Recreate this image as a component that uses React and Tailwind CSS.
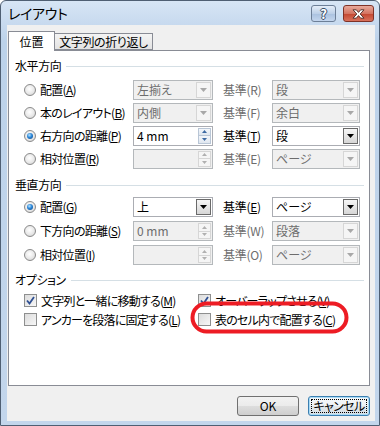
import React from "react";

const FONT = "font-['Noto_Sans_CJK_JP','Noto_Sans_CJK_SC',sans-serif] [font-feature-settings:'palt']";

function Tri({ down = true, color = "#000", w = 7, h = 4 }) {
  return (
    <svg width={w} height={h} viewBox={`0 0 ${w} ${h}`}>
      <path d={down ? `M0 0H${w}L${w / 2} ${h}Z` : `M0 ${h}H${w}L${w / 2} 0Z`} fill={color} />
    </svg>
  );
}

function Acc({ text, k }) {
  return (
    <>
      {text}(<span className="underline underline-offset-[1px]">{k}</span>)
    </>
  );
}

function Radio({ checked }) {
  return (
    <span className="relative inline-block w-[12px] h-[12px] shrink-0 rounded-full border border-[#8a8a8a] bg-[radial-gradient(circle_at_45%_40%,#ffffff_0%,#e8e8e8_55%,#c9c9c9_100%)]">
      {checked && (
        <span className="absolute left-[2px] top-[2px] w-[6px] h-[6px] rounded-full bg-[radial-gradient(circle_at_40%_35%,#b8e4ff_0%,#2a86d8_45%,#0c3f7c_100%)]" />
      )}
    </span>
  );
}

function Check({ checked }) {
  return (
    <span className="relative inline-flex items-center justify-center w-[13px] h-[13px] shrink-0 border border-[#8e8f8f] bg-[linear-gradient(135deg,#dcdcdc,#f7f7f7)]">
      {checked && (
        <svg width="9" height="9" viewBox="0 0 9 9">
          <path d="M1 4.5 L3.5 7.5 L8 1" fill="none" stroke="#2e4f92" strokeWidth="1.8" />
        </svg>
      )}
    </span>
  );
}

function Combo({ text, enabled, wide }) {
  return (
    <div
      className={`flex h-[20px] shrink-0 ${wide ? "w-[88px]" : "w-[80px]"} border ${
        enabled ? "border-[#abadb3] bg-white" : "border-[#b4b8bb] bg-[#f0f0f0]"
      }`}
    >
      <span
        className={`flex-1 flex items-center pl-[3px] text-[12px] leading-none whitespace-nowrap ${
          enabled ? "text-black" : "text-[#6d6d6d]"
        }`}
      >
        {text}
      </span>
      {enabled ? (
        <span className="m-[1px] w-[15px] flex items-center justify-center border border-[#6a6a6a] bg-[linear-gradient(#f6f6f6,#d6d6d6)]">
          <Tri color="#000" />
        </span>
      ) : (
        <span className="m-[1px] w-[15px] flex items-center justify-center border border-[#d6d6d6] bg-[#f5f5f5]">
          <Tri color="#a8a8a8" />
        </span>
      )}
    </div>
  );
}

function Spin({ text, enabled }) {
  const arrow = enabled ? "#3d6aa3" : "#b0b0b0";
  return (
    <div
      className={`flex h-[20px] w-[80px] shrink-0 border ${
        enabled ? "border-[#abadb3] bg-white" : "border-[#b4b8bb] bg-[#f0f0f0]"
      }`}
    >
      <span
        className={`flex-1 flex items-center pl-[3px] text-[12px] leading-none whitespace-pre ${
          enabled ? "text-black" : "text-[#6d6d6d]"
        }`}
      >
        {text}
      </span>
      <span className="my-[1px] mr-[1px] w-[13px] flex flex-col">
        <span
          className={`flex-1 flex items-center justify-center border ${
            enabled ? "border-[#b9c6d6] bg-[linear-gradient(#f4f7fb,#dfe6ef)]" : "border-[#d6d6d6] bg-[#f5f5f5]"
          }`}
        >
          <Tri down={false} color={arrow} w={5} h={3} />
        </span>
        <span
          className={`flex-1 flex items-center justify-center border border-t-0 ${
            enabled ? "border-[#b9c6d6] bg-[linear-gradient(#f4f7fb,#dfe6ef)]" : "border-[#d6d6d6] bg-[#f5f5f5]"
          }`}
        >
          <Tri color={arrow} w={5} h={3} />
        </span>
      </span>
    </div>
  );
}

function Header({ text }) {
  return (
    <div className="flex items-center h-[16px] pl-[6px] pr-[5px]">
      <span className="text-[12px] leading-none text-black tracking-[-0.4px]">{text}</span>
      <span className="flex-1 h-px ml-[5px] bg-[#d5dfe5]" />
    </div>
  );
}

function Row({ h, checked, label, ctrl, refLabel, refEnabled, refCtrl }) {
  return (
    <div className={`flex items-center ${h} pl-[15px]`}>
      <Radio checked={checked} />
      <span className="w-[97px] pl-[4px] text-[12px] leading-none text-black whitespace-nowrap tracking-[-0.7px]">
        {label}
      </span>
      {ctrl}
      <span
        className={`ml-[10px] w-[49px] text-[12px] leading-none whitespace-nowrap tracking-[-0.3px] ${
          refEnabled ? "text-black" : "text-[#6d6d6d]"
        }`}
      >
        {refLabel}
      </span>
      {refCtrl}
    </div>
  );
}

function Opt({ checked, text, k }) {
  return (
    <>
      <Check checked={checked} />
      <span className="ml-[4px] text-[12px] leading-none text-black whitespace-nowrap tracking-[-0.8px]">
        <Acc text={text} k={k} />
      </span>
    </>
  );
}

export default function App() {
  return (
    <div className={`relative w-[380px] h-[426px] overflow-hidden bg-white ${FONT}`}>
      <div className="flex flex-col h-full border border-[#4f5f73] rounded-t-[6px] bg-[linear-gradient(#d7e5f5,#bcd2ea_40px,#c3d6ec)] pl-[6px] pr-[4px] pb-[4px]">
        {/* Title bar */}
        <div className="flex items-start h-[24px] shrink-0">
          <span className="pl-[1px] pt-[3px] text-[14px] leading-[18px] text-black tracking-[-0.3px]">レイアウト</span>
          <span className="flex-1" />
          <span className="mt-[4px] w-[25px] h-[17px] flex items-center justify-center rounded-[3px] border border-[#6d7f97] bg-[linear-gradient(#e4edf8,#bdd0e8_50%,#a9c1df_51%,#c4d6ee)]">
            <span className="text-[13px] font-bold leading-none text-white [text-shadow:1px_0_#3a4d66,-1px_0_#3a4d66,0_1px_#3a4d66,0_-1px_#3a4d66]">
              ?
            </span>
          </span>
          <span className="mt-[4px] ml-[7px] mr-[1px] w-[31px] h-[17px] flex items-center justify-center rounded-[3px] border border-[#7f3227] bg-[linear-gradient(#e8a99b,#d47462_50%,#c24630_51%,#d9715c)]">
            <svg width="13" height="10" viewBox="0 0 13 10">
              <path
                d="M1 0.8 H4.3 L6.5 3.4 L8.7 0.8 H12 L8.2 5 L12 9.2 H8.7 L6.5 6.6 L4.3 9.2 H1 L4.8 5 Z"
                fill="#ffffff"
                stroke="#4b2a26"
                strokeWidth="0.9"
              />
            </svg>
          </span>
        </div>

        {/* Client area */}
        <div className="flex-1 flex flex-col bg-[#f0f0f0] pl-[1px] pr-[5px] pt-[6px]">
          {/* Tabs */}
          <div className="flex items-end h-[20px] shrink-0">
            <div className="relative z-10 w-[47px] h-[20px] flex items-center justify-center border border-b-0 border-[#898c95] bg-white text-[12px] leading-none text-black">
              位置
            </div>
            <div className="w-[98px] h-[17px] mb-[1px] flex items-center justify-center border border-l-0 border-[#898c95] bg-[linear-gradient(#f4f4f4,#e3e3e3)] text-[12px] leading-none text-black whitespace-nowrap tracking-[-0.4px]">
              文字列の折り返し
            </div>
          </div>

          {/* Panel */}
          <div className="-mt-px h-[336px] flex flex-col border border-[#898c95] bg-white pt-[7px]">
            <Header text="水平方向" />
            <div className="mt-[4px] flex flex-col">
              <Row
                h="h-[23px]"
                label={<Acc text="配置" k="A" />}
                ctrl={<Combo text="左揃え" />}
                refLabel="基準(R)"
                refCtrl={<Combo text="段" wide />}
              />
              <Row
                h="h-[23px]"
                label={<Acc text="本のレイアウト" k="B" />}
                ctrl={<Combo text="内側" />}
                refLabel="基準(F)"
                refCtrl={<Combo text="余白" wide />}
              />
              <Row
                h="h-[23px]"
                checked
                label={<Acc text="右方向の距離" k="P" />}
                ctrl={<Spin text="4 mm" enabled />}
                refEnabled
                refLabel={<Acc text="基準" k="T" />}
                refCtrl={<Combo text="段" wide enabled />}
              />
              <Row
                h="h-[23px]"
                label={<Acc text="相対位置" k="R" />}
                ctrl={<Spin text="" />}
                refLabel="基準(E)"
                refCtrl={<Combo text="ページ" wide />}
              />
            </div>

            <div className="mt-[7px]">
              <Header text="垂直方向" />
            </div>
            <div className="mt-[2px] flex flex-col">
              <Row
                h="h-[24px]"
                checked
                label={<Acc text="配置" k="G" />}
                ctrl={<Combo text="上" enabled />}
                refEnabled
                refLabel={<Acc text="基準" k="E" />}
                refCtrl={<Combo text="ページ" wide enabled />}
              />
              <Row
                h="h-[24px]"
                label={<Acc text="下方向の距離" k="S" />}
                ctrl={<Spin text="0 mm" />}
                refLabel="基準(W)"
                refCtrl={<Combo text="段落" wide />}
              />
              <Row
                h="h-[24px]"
                label={<Acc text="相対位置" k="I" />}
                ctrl={<Spin text="" />}
                refLabel="基準(O)"
                refCtrl={<Combo text="ページ" wide />}
              />
            </div>

            <div className="mt-[5px]">
              <Header text="オプション" />
            </div>
            <div className="mt-[3px] flex flex-col">
              <div className="flex items-center h-[19px]">
                <div className="w-[189px] flex items-center pl-[15px]">
                  <Opt checked text="文字列と一緒に移動する" k="M" />
                </div>
                <div className="flex items-center">
                  <Opt checked text="オーバーラップさせる" k="V" />
                </div>
              </div>
              <div className="flex items-center h-[19px]">
                <div className="w-[189px] flex items-center pl-[15px]">
                  <Opt text="アンカーを段落に固定する" k="L" />
                </div>
                <div className="flex items-center">
                  <Opt text="表のセル内で配置する" k="C" />
                </div>
              </div>
            </div>
          </div>

          {/* Buttons */}
          <div className="mt-[10px] flex justify-end gap-[9px]">
            <button className="w-[62px] h-[20px] rounded-[3px] border border-[#707070] bg-[linear-gradient(#f2f2f2,#ebebeb_50%,#dddddd_51%,#cfcfcf)] text-[12px] leading-none text-black">
              OK
            </button>
            <button className="w-[62px] h-[20px] rounded-[3px] border border-[#3c7fb1] bg-[linear-gradient(#f7f9fb,#eef2f5_50%,#e2e8ec_51%,#d6dee4)] p-[2px] text-[12px] leading-none text-black shadow-[inset_0_0_0_1px_#a9dbf6]">
              <span className="flex items-center justify-center w-full h-full border border-dotted border-black whitespace-nowrap tracking-[-0.6px]">
                キャンセル
              </span>
            </button>
          </div>
        </div>
      </div>

      {/* Red annotation */}
      <svg className="absolute left-[190px] top-[301px]" width="159" height="33" viewBox="0 0 159 33">
        <rect x="2.5" y="2.5" width="154" height="28" rx="14" fill="none" stroke="#ed1c24" strokeWidth="4" />
      </svg>
    </div>
  );
}
